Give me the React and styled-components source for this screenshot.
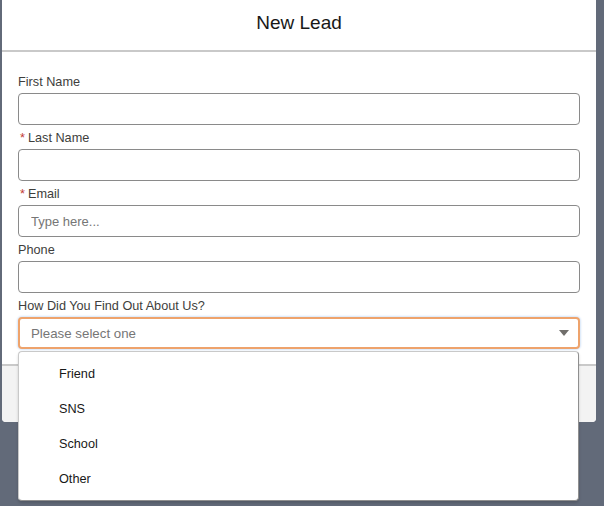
import React from 'react';
import styled, { createGlobalStyle } from 'styled-components';

const GlobalStyle = createGlobalStyle`
  html, body {
    margin: 0;
    padding: 0;
    background: #626a79;
    font-family: 'Liberation Sans', Arial, sans-serif;
  }
  * {
    box-sizing: border-box;
  }
`;

const fields = [
  { label: 'First Name' },
  { label: 'Last Name', required: true },
  { label: 'Email', required: true, placeholder: 'Type here...' },
  { label: 'Phone' },
];

const options = ['Friend', 'SNS', 'School', 'Other'];

const App = () => {
  return (
    <React.Fragment>
      <GlobalStyle />
      <Page>
        <Modal>
          <Header>
            <Title>New Lead</Title>
          </Header>
          <Body>
            {fields.map((f) => (
              <Field key={f.label}>
                <Label>
                  {f.required && <Required>*</Required>}
                  {f.label}
                </Label>
                <Input type="text" placeholder={f.placeholder || ''} />
              </Field>
            ))}
            <Field>
              <Label>How Did You Find Out About Us?</Label>
              <Combo>
                <Select $focused>
                  <Placeholder>Please select one</Placeholder>
                  <svg width="10" height="6" viewBox="0 0 10 6">
                    <polygon points="0,0 10,0 5,6" fill="#706e6b" />
                  </svg>
                </Select>
                <Listbox>
                  {options.map((o) => (
                    <Option key={o}>{o}</Option>
                  ))}
                </Listbox>
              </Combo>
            </Field>
          </Body>
          <Footer />
        </Modal>
      </Page>
    </React.Fragment>
  );
};

const Page = styled.div`
  width: 604px;
  height: 506px;
  padding-left: 2px;
  overflow: hidden;
`;

const Modal = styled.div`
  width: 594px;
  background: #fff;
  border-radius: 0 0 4px 4px;
`;

const Header = styled.header`
  height: 52px;
  border-bottom: 2px solid #c9c9c9;
  display: flex;
  justify-content: center;
  padding-top: 9px;
`;

const Title = styled.h2`
  margin: 0;
  font-size: 19px;
  line-height: 28px;
  font-weight: 400;
  color: #181818;
`;

const Body = styled.div`
  padding: 17px 16px 15px;
`;

const Field = styled.div`
  display: flex;
  flex-direction: column;
`;

const Label = styled.label`
  display: flex;
  align-items: baseline;
  padding-top: 3px;
  margin-bottom: 1px;
  font-size: 12.7px;
  line-height: 20px;
  color: #3e3e3c;
`;

const Required = styled.abbr`
  color: #c23934;
  margin: 0 3px 0 2px;
  text-decoration: none;
`;

const Input = styled.input`
  height: 32px;
  width: 100%;
  border: 1px solid #8a8a8a;
  border-radius: 4px;
  padding: 0 12px;
  font-family: inherit;
  font-size: 13px;
  color: #181818;
  background: #fff;
  &::placeholder {
    color: #767676;
  }
`;

const Combo = styled.div`
  position: relative;
`;

const Select = styled.div`
  height: 32px;
  display: flex;
  align-items: center;
  justify-content: space-between;
  padding: 0 9px 0 11px;
  border-radius: 4px;
  border: ${(p) => (p.$focused ? '2px solid #eea36c' : '1px solid #8a8a8a')};
  box-shadow: ${(p) => (p.$focused ? '0 0 2px 1px #d6e5f8' : 'none')};
  background: #fff;
`;

const Placeholder = styled.span`
  font-size: 13.3px;
  color: #767676;
`;

const Listbox = styled.ul`
  position: absolute;
  top: calc(100% + 2px);
  left: 0;
  width: 561px;
  margin: 0;
  padding: 5px 0 3px;
  list-style: none;
  background: #fff;
  border: 1px solid #c9c9c9;
  border-right-color: #8f8f8f;
  border-bottom-color: #8f8f8f;
  border-radius: 4px;
  box-shadow: 0 2px 3px rgba(0, 0, 0, 0.16);
  z-index: 10;
`;

const Option = styled.li`
  height: 35px;
  line-height: 35px;
  padding-left: 40px;
  font-size: 12.7px;
  color: #181818;
`;

const Footer = styled.footer`
  height: 58px;
  border-top: 2px solid #c9c9c9;
  background: #f3f3f3;
  border-radius: 0 0 4px 4px;
`;

export default App;
